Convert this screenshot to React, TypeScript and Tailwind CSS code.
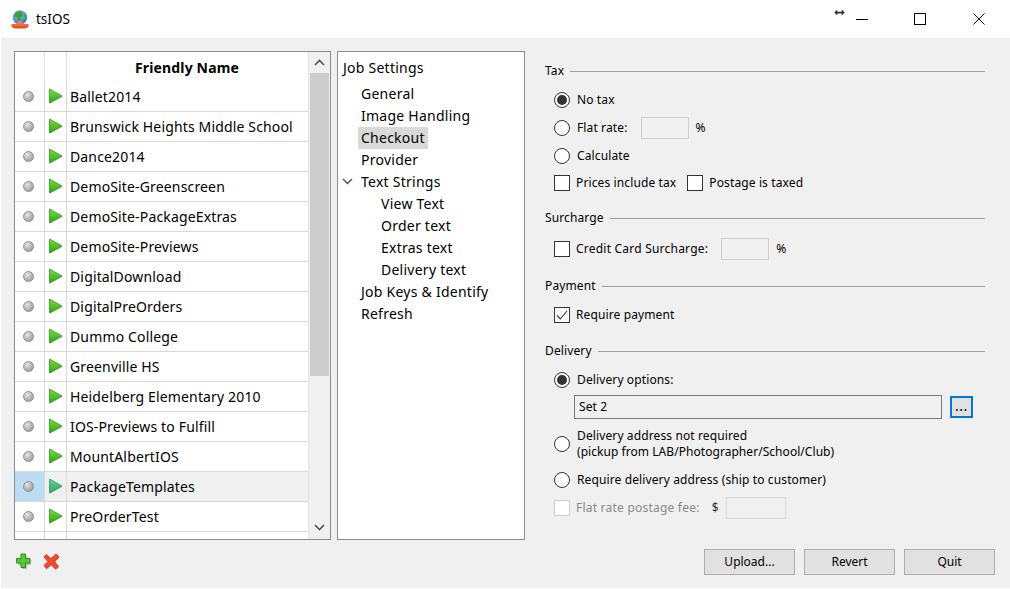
import React from "react";

const sites = [
  "Ballet2014",
  "Brunswick Heights Middle School",
  "Dance2014",
  "DemoSite-Greenscreen",
  "DemoSite-PackageExtras",
  "DemoSite-Previews",
  "DigitalDownload",
  "DigitalPreOrders",
  "Dummo College",
  "Greenville HS",
  "Heidelberg Elementary 2010",
  "IOS-Previews to Fulfill",
  "MountAlbertIOS",
  "PackageTemplates",
  "PreOrderTest",
];

const tree = [
  { name: "General", level: 1 },
  { name: "Image Handling", level: 1 },
  { name: "Checkout", level: 1, selected: true },
  { name: "Provider", level: 1 },
  { name: "Text Strings", level: 1, open: true },
  { name: "View Text", level: 2 },
  { name: "Order text", level: 2 },
  { name: "Extras text", level: 2 },
  { name: "Delivery text", level: 2 },
  { name: "Job Keys & Identify", level: 1 },
  { name: "Refresh", level: 1 },
];

function AppIcon() {
  return (
    <svg width="18" height="19" viewBox="0 0 18 19">
      <defs>
        <radialGradient id="globe" cx="0.4" cy="0.3" r="0.8">
          <stop offset="0" stopColor="#8fd0f2" />
          <stop offset="1" stopColor="#1f68b8" />
        </radialGradient>
        <linearGradient id="arrow" x1="0" y1="0" x2="0" y2="1">
          <stop offset="0" stopColor="#ff9a5c" />
          <stop offset="1" stopColor="#e8401c" />
        </linearGradient>
      </defs>
      <circle cx="9" cy="7.500" r="7.200" fill="url(#globe)" />
      <path d="M4.500 2.500 Q8 0.500 11 2 L12 5 L9.500 8 L10 11 L7 11 L6 7.500 L2.800 6.500 Z" fill="#3f9d3a" />
      <path d="M13 4 L15.800 6 L15.500 9.500 L13 8.500 Z" fill="#4aa83f" />
      <path d="M0.500 14 H5 L9 10.500 L13 14 H17.500 V17 L14 18.500 H4 L0.500 17 Z" fill="url(#arrow)" />
    </svg>
  );
}

function Ball() {
  return <div className="w-[11px] h-[11px] mr-[3px] rounded-full border border-[#8f8f8f] bg-[radial-gradient(circle_at_35%_30%,#e6e6e6,#a5a5a5_70%,#8a8a8a)]" />;
}

function Play({ id, selected }: { id: string; selected?: boolean }) {
  return (
    <svg width="16" height="17" viewBox="0 0 16 17">
      <defs>
        <linearGradient id={id} x1="0" y1="0" x2="0" y2="1">
          <stop offset="0" stopColor={selected ? "#6fd08a" : "#7fdc3f"} />
          <stop offset="1" stopColor={selected ? "#2aa560" : "#25a80f"} />
        </linearGradient>
      </defs>
      <path d="M2 2.500 L14.500 9 L2 15.500 Z" fill="#8c8c8c" opacity="0.6" />
      <path d="M1.500 1 L14 8 L1.500 15 Z" fill={`url(#${id})`} stroke={selected ? "#2a9a68" : "#2f9a1a"} strokeWidth="0.8" />
    </svg>
  );
}

function Radio({ checked }: { checked?: boolean }) {
  return (
    <div className="w-4 h-4 shrink-0 rounded-full border border-[#333333] bg-white flex items-center justify-center">
      {checked && <div className="w-2.5 h-2.5 rounded-full bg-[#333333]" />}
    </div>
  );
}

function Check({ checked, disabled }: { checked?: boolean; disabled?: boolean }) {
  return (
    <div className={`w-4 h-4 shrink-0 border bg-white flex items-center justify-center ${disabled ? "border-[#cccccc]" : "border-[#333333]"}`}>
      {checked && (
        <svg width="12" height="12" viewBox="0 0 12 12" fill="none" stroke="#333333" strokeWidth="1.1">
          <path d="M1 6.500 L4.300 10 L11 2" />
        </svg>
      )}
    </div>
  );
}

function SectionTitle({ title, className }: { title: string; className?: string }) {
  return (
    <div className={`flex items-center h-4 gap-[6px] text-[12px] ${className ?? ""}`}>
      <span>{title}</span>
      <div className="flex-1 h-px bg-[#a0a0a0]" />
    </div>
  );
}

function RadioRow({ label, checked, children }: { label: string; checked?: boolean; children?: React.ReactNode }) {
  return (
    <div className="flex items-center h-7 ml-[9px] gap-[7px] text-[12px]">
      <Radio checked={checked} />
      <span>{label}</span>
      {children}
    </div>
  );
}

function TextBox({ className }: { className: string }) {
  return <div className={`border border-[#cfcfcf] bg-[#f0f0f0] ${className}`} />;
}

function WinButton({ label }: { label: string }) {
  return (
    <button className="w-[91px] h-[26px] bg-[#e1e1e1] border border-[#adadad] text-[12px] text-black">{label}</button>
  );
}

export default function App() {
  return (
    <div className="w-[1010px] h-[589px] bg-white overflow-hidden text-black font-['Noto_Sans',sans-serif]">
      {/* Title bar */}
      <div className="h-[38px] flex items-center">
        <div className="ml-[11px] mr-[7px] flex">
          <AppIcon />
        </div>
        <span className="text-[13.5px]">tsIOS</span>
        <div className="ml-auto flex items-center h-full">
          <svg width="11" height="7" viewBox="0 0 12 8" className="mr-[11px] mb-[14px]" fill="#333333">
            <path d="M0 4 L3.500 0.500 V3 H8.500 V0.500 L12 4 L8.500 7.500 V5 H3.500 V7.500 Z" />
          </svg>
          <div className="w-[12px] h-px bg-black mr-[46px]" />
          <div className="w-[12px] h-[12px] border border-black mr-[47px]" />
          <svg width="12" height="12" viewBox="0 0 13 13" stroke="#000000" strokeWidth="1" className="mr-[25px]">
            <path d="M0.500 0.500 L12.500 12.500 M12.500 0.500 L0.500 12.500" />
          </svg>
        </div>
      </div>

      {/* Window body */}
      <div className="ml-px h-[550px] bg-[#f0f0f0] flex flex-col">
        <div className="flex pt-[13px] pl-[13px] h-[503px]">
          {/* Job list */}
          <div className="w-[317px] h-[489px] border border-[#8c8c90] bg-white flex overflow-hidden">
            <div className="flex-1 min-w-0">
              <div className="flex h-[30px]">
                <div className="w-[30px] border-r border-[#e4e4e4]" />
                <div className="w-[22px] border-r border-[#e4e4e4]" />
                <div className="flex-1 pr-[1px] text-center font-bold text-[14px] tracking-[0.15px] leading-[32px]">Friendly Name</div>
              </div>
              {sites.map((site, i) => {
                const selected = site === "PackageTemplates";
                return (
                  <div key={site} className={`flex h-[30px] border-b border-[#d9d9d9] ${selected ? "bg-[#f0f0f0]" : ""}`}>
                    <div className={`w-[30px] flex items-center justify-center border-r border-[#d9d9d9] ${selected ? "bg-[#bcdcf4]" : ""}`}>
                      <Ball />
                    </div>
                    <div className="w-[22px] flex items-center justify-center border-r border-[#d9d9d9]">
                      <Play id={`play-${i}`} selected={selected} />
                    </div>
                    <div className="flex-1 pl-[3px] text-[14px] tracking-[0.15px] leading-[29px] truncate">{site}</div>
                  </div>
                );
              })}
              <div className="flex h-[8px]">
                <div className="w-[30px] border-r border-[#d9d9d9]" />
                <div className="w-[22px] border-r border-[#d9d9d9]" />
              </div>
            </div>
            {/* Scrollbar */}
            <div className="w-[22px] bg-[#f0f0f0] flex flex-col border-l border-[#e4e4e4]">
              <div className="h-[21px] flex items-center justify-center">
                <svg width="11" height="7" viewBox="0 0 11 7" fill="none" stroke="#505050" strokeWidth="1.6">
                  <path d="M1 6 L5.500 1.500 L10 6" />
                </svg>
              </div>
              <div className="h-[303px] mx-px bg-[#cdcdcd]" />
              <div className="flex-1 flex items-end justify-center pb-[8px]">
                <svg width="11" height="7" viewBox="0 0 11 7" fill="none" stroke="#505050" strokeWidth="1.6">
                  <path d="M1 1 L5.500 5.500 L10 1" />
                </svg>
              </div>
            </div>
          </div>

          {/* Settings tree */}
          <div className="w-[188px] h-[489px] ml-[6px] border border-[#8c8c90] bg-white pt-[5px] text-[14px] tracking-[0.25px]">
            <div className="h-[22px] leading-[22px] pl-[5px]">Job Settings</div>
            <div className="mt-[4px]">
              {tree.map((item) => (
                <div key={item.name} className={`relative h-[22px] leading-[22px] ${item.level === 1 ? "pl-[20px]" : "pl-[40px]"}`}>
                  {item.open && (
                    <svg width="11" height="7" viewBox="0 0 11 7" fill="none" stroke="#505050" strokeWidth="1.4" className="absolute left-[4px] top-[7px]">
                      <path d="M1 1 L5.500 5.500 L10 1" />
                    </svg>
                  )}
                  <span className={`inline-block px-[3px] ${item.selected ? "bg-[#d9d9d9]" : ""}`}>{item.name}</span>
                </div>
              ))}
            </div>
          </div>

          {/* Checkout options */}
          <div className="w-[440px] ml-[20px] pt-[12px] tracking-[0.12px]">
            <SectionTitle title="Tax" />
            <div className="mt-[7px]">
              <RadioRow label="No tax" checked />
              <RadioRow label="Flat rate:">
                <TextBox className="w-[48px] h-[22px] ml-[7px]" />
                <span className="-ml-[1px]">%</span>
              </RadioRow>
              <RadioRow label="Calculate" />
              <div className="flex items-center h-7 -mt-px ml-[9px] gap-[6px] text-[12px]">
                <Check />
                <span>Prices include tax</span>
                <div className="ml-[5px]"><Check /></div>
                <span>Postage is taxed</span>
              </div>
            </div>

            <SectionTitle title="Surcharge" className="mt-[13px]" />
            <div className="flex items-center h-7 mt-[9px] ml-[9px] gap-[6px] text-[12px]">
              <Check />
              <span className="tracking-[0.22px]">Credit Card Surcharge:</span>
              <TextBox className="w-[48px] h-[22px] ml-[7px]" />
              <span className="ml-[1px]">%</span>
            </div>

            <SectionTitle title="Payment" className="mt-[15px]" />
            <div className="flex items-center h-7 mt-[7px] ml-[9px] gap-[6px] text-[12px]">
              <Check checked />
              <span>Require payment</span>
            </div>

            <SectionTitle title="Delivery" className="mt-[14px]" />
            <div className="mt-[7px]">
              <RadioRow label="Delivery options:" checked />
            </div>
            <div className="flex items-center h-[24px] mt-[1px] ml-[29px] text-[12px]">
              <div className="w-[368px] h-[24px] border border-[#7a7a7a] px-[4px] leading-[22px]">Set 2</div>
              <div className="w-[23px] h-[22px] ml-[8px] border-2 border-[#0078d7] bg-[#e1e1e1] text-[14px] tracking-[0.5px] leading-[15px] text-center">...</div>
            </div>
            <div className="flex items-center h-[34px] mt-[8px] ml-[9px] gap-[7px] text-[12px] leading-[16px]">
              <Radio />
              <span>
                Delivery address not required
                <br />
                <span className="tracking-[0.05px]">(pickup from LAB/Photographer/School/Club)</span>
              </span>
            </div>
            <div className="mt-[5px]">
              <RadioRow label="Require delivery address (ship to customer)" />
            </div>
            <div className="flex items-center h-7 ml-[9px] gap-[6px] text-[12px]">
              <Check disabled />
              <span className="text-[#8a8a8a] tracking-[0.22px]">Flat rate postage fee:</span>
              <span className="ml-[6px] text-[#333333]">$</span>
              <div className="w-[60px] h-[22px] border border-[#d9d9d9] ml-[1px]" />
            </div>
          </div>
        </div>

        {/* Bottom bar */}
        <div className="flex items-center h-[26px] mt-[8px]">
          <div className="flex items-center ml-[14px] gap-[11px] mb-[2px]">
            <svg width="17" height="17" viewBox="0 0 17 17">
              <path d="M6 2 H11 V6 H15 V11 H11 V15 H6 V11 H2 V6 H6 Z" fill="#8c8c8c" opacity="0.5" transform="translate(1 1)" />
              <path d="M6 1 H10.500 V5.500 H15 V10 H10.500 V14.500 H6 V10 H1.500 V5.500 H6 Z" fill="#58c53a" stroke="#2f8f1e" strokeWidth="1" />
            </svg>
            <svg width="17" height="17" viewBox="0 0 17 17">
              <path d="M3.800 2.500 L8.500 6.500 L13.500 2 L16.500 5 L12 9.500 L16 14.500 L13 17 L8.500 12.500 L4 16.500 L1.500 13.500 L5.500 9.500 L1.500 5 Z" fill="#8c8c8c" opacity="0.5" />
              <path d="M3 1.500 L8 5.500 L13 1 L16 4 L11.500 8.500 L15.500 13.500 L12.500 16 L8 11.500 L3.500 15.500 L1 12.500 L5 8.500 L1 4 Z" fill="#f2492a" stroke="#c9321a" strokeWidth="0.8" />
            </svg>
          </div>
          <div className="ml-auto mr-[15px] flex gap-[9px]">
            <WinButton label="Upload..." />
            <WinButton label="Revert" />
            <WinButton label="Quit" />
          </div>
        </div>
      </div>
    </div>
  );
}
